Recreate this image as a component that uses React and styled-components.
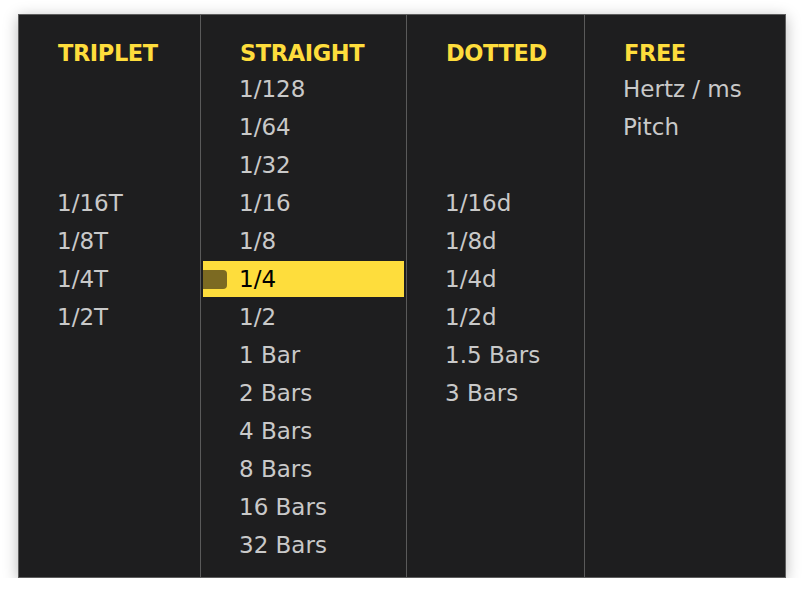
import React from 'react';
import styled, { createGlobalStyle } from 'styled-components';

const GlobalStyle = createGlobalStyle`
  html, body {
    margin: 0;
    padding: 0;
    background: #ffffff;
  }
  body {
    font-family: "DejaVu Sans", Verdana, sans-serif;
  }
`;

const Panel = styled.div`
  box-sizing: border-box;
  margin: 14px 0 0 18px;
  width: 768px;
  height: 564px;
  display: flex;
  background: #1e1e1f;
  border: 1px solid #5e5e5e;
  box-shadow: 0 3px 14px rgba(0, 0, 0, 0.28);
`;

const Column = styled.div`
  box-sizing: border-box;
  width: ${props => props.width}px;
  flex-shrink: 0;
  display: flex;
  flex-direction: column;
  padding-top: 19px;
  border-left: ${props => (props.first ? 'none' : '1px solid #5a5a5a')};
`;

const Header = styled.div`
  height: 36px;
  line-height: 38px;
  padding-left: 39px;
  font-size: 22.5px;
  font-weight: bold;
  color: #fedd3c;
  letter-spacing: -0.4px;
  white-space: nowrap;
`;

const Item = styled.div`
  height: 38px;
  line-height: 38px;
  padding-left: 38px;
  font-size: 23px;
  color: #c9c9c9;
  white-space: nowrap;
`;

const SelectedItem = styled.div`
  height: 36px;
  margin: 1px 2px;
  display: flex;
  align-items: center;
  background: #fedd3c;
  font-size: 23px;
  color: #000000;
  white-space: nowrap;
`;

const Marker = styled.span`
  width: 24px;
  height: 19px;
  margin-right: 12px;
  border-radius: 0 4px 4px 0;
  background: #7c6a22;
`;

const columns = [
  {
    title: 'TRIPLET',
    width: 181,
    items: [null, null, null, '1/16T', '1/8T', '1/4T', '1/2T'],
  },
  {
    title: 'STRAIGHT',
    width: 206,
    items: ['1/128', '1/64', '1/32', '1/16', '1/8', '1/4', '1/2', '1 Bar', '2 Bars', '4 Bars', '8 Bars', '16 Bars', '32 Bars'],
  },
  {
    title: 'DOTTED',
    width: 178,
    items: [null, null, null, '1/16d', '1/8d', '1/4d', '1/2d', '1.5 Bars', '3 Bars'],
  },
  {
    title: 'FREE',
    width: 201,
    items: ['Hertz / ms', 'Pitch'],
  },
];

const selected = '1/4';

const App = () => {
  return (
    <>
      <GlobalStyle />
      <Panel>
        {columns.map((col, ci) => (
          <Column key={col.title} width={col.width} first={ci === 0}>
            <Header>{col.title}</Header>
            {col.items.map((item, i) =>
              item === selected ? (
                <SelectedItem key={i}>
                  <Marker />
                  {item}
                </SelectedItem>
              ) : (
                <Item key={i}>{item}</Item>
              )
            )}
          </Column>
        ))}
      </Panel>
    </>
  );
};

export default App;
